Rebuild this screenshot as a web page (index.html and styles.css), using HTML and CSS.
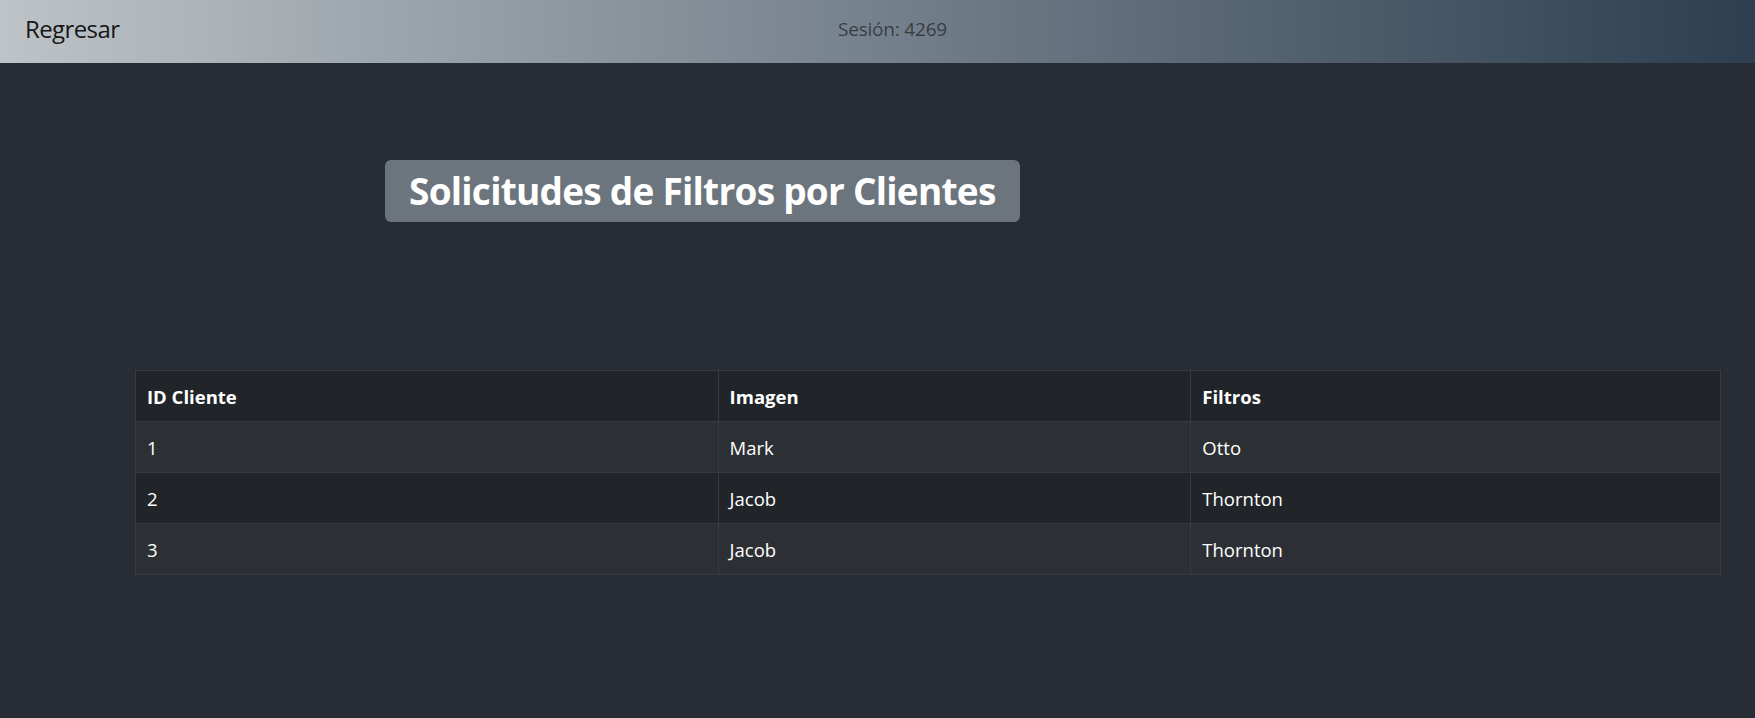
FILE: index.html
```html
<!DOCTYPE html>
<html lang="es">
<head>
<meta charset="utf-8">
<title>Solicitudes de Filtros por Clientes</title>
<link rel="stylesheet" href="styles.css">
</head>
<body>
<header class="topbar">
  <a class="back" href="#">Regresar</a>
  <span class="session">Sesión: 4269</span>
  <span class="spacer"></span>
</header>
<main class="content">
  <div class="title-wrap">
    <h2 class="title">Solicitudes de Filtros por Clientes</h2>
  </div>
  <table class="data">
    <thead>
      <tr><th class="c1">ID Cliente</th><th class="c2">Imagen</th><th class="c3">Filtros</th></tr>
    </thead>
    <tbody>
      <tr class="odd"><td>1</td><td>Mark</td><td>Otto</td></tr>
      <tr><td>2</td><td>Jacob</td><td>Thornton</td></tr>
      <tr class="odd"><td>3</td><td>Jacob</td><td>Thornton</td></tr>
    </tbody>
  </table>
</main>
</body>
</html>
```
FILE: styles.css
```css
html, body {
  margin: 0;
  padding: 0;
}
body {
  background: #282c34;
  font-family: "Open Sans", "Noto Sans", sans-serif;
  color: #fff;
  min-height: 718px;
}
.topbar {
  height: 63px;
  display: grid;
  grid-template-columns: 1fr auto 1fr;
  align-items: center;
  padding: 0 22px 5px 25px;
  background: linear-gradient(to right, #bdc3c7, #2c3e50);
  box-sizing: border-box;
}
.back {
  font-size: 24px;
  line-height: 30px;
  color: rgba(0, 0, 0, 0.9);
  text-decoration: none;
  justify-self: start;
  letter-spacing: -0.6px;
}
.session {
  font-size: 19px;
  line-height: 28px;
  color: rgba(0, 0, 0, 0.55);
  padding-left: 27px;
  letter-spacing: -0.2px;
}
.content {
  padding-top: 97px;
}
.title-wrap {
  padding-left: 385px;
}
.title {
  display: inline-block;
  margin: 0;
  background: #6c757d;
  color: #fff;
  font-weight: 700;
  font-size: 37px;
  line-height: 48px;
  padding: 7px 24px;
  border-radius: 6px;
  letter-spacing: -0.75px;
}
.data {
  margin: 148px 0 0 135px;
  width: 1586px;
  border-collapse: collapse;
  font-size: 18.5px;
}
.data th, .data td {
  border: 1px solid #373b3e;
  height: 51px;
  box-sizing: border-box;
  padding: 0 11px;
  text-align: left;
  vertical-align: middle;
  color: #fff;
}
.data th {
  font-weight: 700;
  background: #212529;
}
.data td {
  background: #212529;
}
.data tr.odd td {
  background: #2c3034;
}
.c1 { width: 583px; }
.c2 { width: 473px; }
.c3 { width: 530px; }
```
